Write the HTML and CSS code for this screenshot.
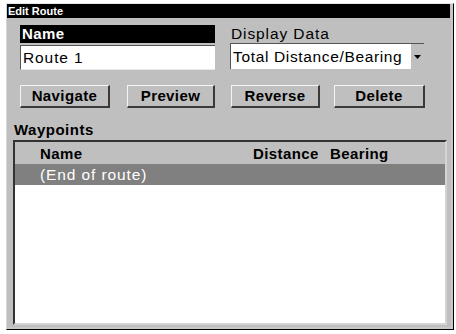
FILE: index.html
```html
<!DOCTYPE html>
<html>
<head>
<meta charset="utf-8">
<link rel="stylesheet" href="styles.css">
</head>
<body>
<div class="window">
  <div class="titlebar">Edit Route</div>
  <div class="content">
    <div class="top">
      <div class="col">
        <div class="name-label">Name</div>
        <div class="input">Route 1</div>
      </div>
      <div class="col">
        <div class="plain-label">Display Data</div>
        <div class="select">
          <span class="select-text">Total Distance/Bearing</span>
          <span class="arrow"><svg width="7" height="4" viewBox="0 0 7 4"><path d="M0 0H7L3.5 4Z" fill="#000"/></svg></span>
        </div>
      </div>
    </div>
    <div class="buttons">
      <div class="pair">
        <div class="btn w90">Navigate</div>
        <div class="btn w88">Preview</div>
      </div>
      <div class="pair">
        <div class="btn w89">Reverse</div>
        <div class="btn w91">Delete</div>
      </div>
    </div>
  </div>
  <div class="waypoints">
    <div class="wp-label">Waypoints</div>
    <div class="list">
      <div class="row header">
        <span class="c-name">Name</span>
        <span class="c-dist">Distance</span>
        <span class="c-bear">Bearing</span>
      </div>
      <div class="row selected">
        <span class="c-name">(End of route)</span>
      </div>
    </div>
  </div>
</div>
</body>
</html>
```
FILE: styles.css
```css
html, body {
  margin: 0;
  padding: 0;
  background: #ffffff;
}
body {
  font-family: "Liberation Sans", Arial, sans-serif;
  color: #000;
}
.window {
  margin: 3px 0 0 6px;
  width: 446px;
  height: 325px;
  background: #bfbfbf;
  border-top: 1px solid #e6e6e6;
  border-left: 1px solid #d6d6d6;
  border-right: 1px solid #000;
  border-bottom: 1px solid #000;
  box-shadow: inset -2px -2px 0 #c8c8c8;
  display: flex;
  flex-direction: column;
}
.titlebar {
  height: 14px;
  margin-right: 3px;
  background: #000;
  color: #fff;
  font-size: 11px;
  font-weight: bold;
  line-height: 14px;
  padding-left: 1px;
}
.content {
  padding: 7px 0 0 13px;
}
.top {
  display: flex;
  gap: 15px;
}
.col {
  display: flex;
  flex-direction: column;
}
.col:first-child { width: 195px; }
.col:last-child { width: 194px; }
.name-label {
  height: 18px;
  background: #000;
  color: #fff;
  font-size: 15px;
  font-weight: bold;
  line-height: 18px;
  padding-left: 2px;
  margin-bottom: 2px;
  letter-spacing: 0.4px;
}
.input {
  height: 23px;
  background: #fff;
  border-top: 1px solid #555;
  border-left: 1px solid #555;
  border-bottom: 1px solid #e8e8e8;
  font-size: 15.5px;
  line-height: 24px;
  padding-left: 2px;
  letter-spacing: 0.9px;
}
.plain-label {
  height: 18px;
  font-size: 15.5px;
  line-height: 18px;
  padding-left: 1px;
  letter-spacing: 0.9px;
}
.select {
  height: 25px;
  background: #fff;
  border-top: 1px solid #555;
  border-left: 1px solid #555;
  display: flex;
  align-items: stretch;
}
.select-text {
  flex: 1;
  font-size: 15.5px;
  line-height: 26px;
  padding-left: 2px;
  letter-spacing: 0.65px;
  white-space: nowrap;
  overflow: hidden;
}
.arrow {
  width: 13px;
  background: #bfbfbf;
  display: flex;
  align-items: center;
  justify-content: center;
}
.buttons {
  display: flex;
  gap: 15px;
  margin-top: 15px;
}
.pair {
  display: flex;
  justify-content: space-between;
  width: 195px;
}
.btn {
  box-sizing: border-box;
  height: 23px;
  background: #bfbfbf;
  border-top: 1px solid #f4f4f4;
  border-left: 1px solid #f4f4f4;
  border-right: 2px solid #3a3a3a;
  border-bottom: 2px solid #3a3a3a;
  font-size: 15px;
  font-weight: bold;
  line-height: 20px;
  text-align: center;
  letter-spacing: 0.4px;
}
.w90 { width: 90px; }
.w88 { width: 88px; }
.w89 { width: 89px; margin-left: 1px; }
.w91 { width: 91px; }
.waypoints {
  padding: 13px 0 0 6px;
  display: flex;
  flex-direction: column;
  flex: 1;
}
.wp-label {
  font-size: 15px;
  font-weight: bold;
  line-height: 18px;
  height: 19px;
  padding-left: 1px;
  letter-spacing: 0.5px;
}
.list {
  width: 430px;
  height: 181px;
  background: #fff;
  border-top: 2px solid #333;
  border-left: 2px solid #333;
  border-right: 2px solid #d4d4d4;
  border-bottom: 2px solid #d4d4d4;
}
.row {
  display: flex;
  height: 22px;
  align-items: center;
  letter-spacing: 0.4px;
}
.header {
  background: #bfbfbf;
  font-size: 15px;
  font-weight: bold;
}
.selected {
  background: #808080;
  color: #fff;
  height: 21px;
  font-size: 15.5px;
  letter-spacing: 0.9px;
}
.c-name {
  padding-left: 25px;
  width: 213px;
}
.c-dist {
  width: 77px;
}
```
